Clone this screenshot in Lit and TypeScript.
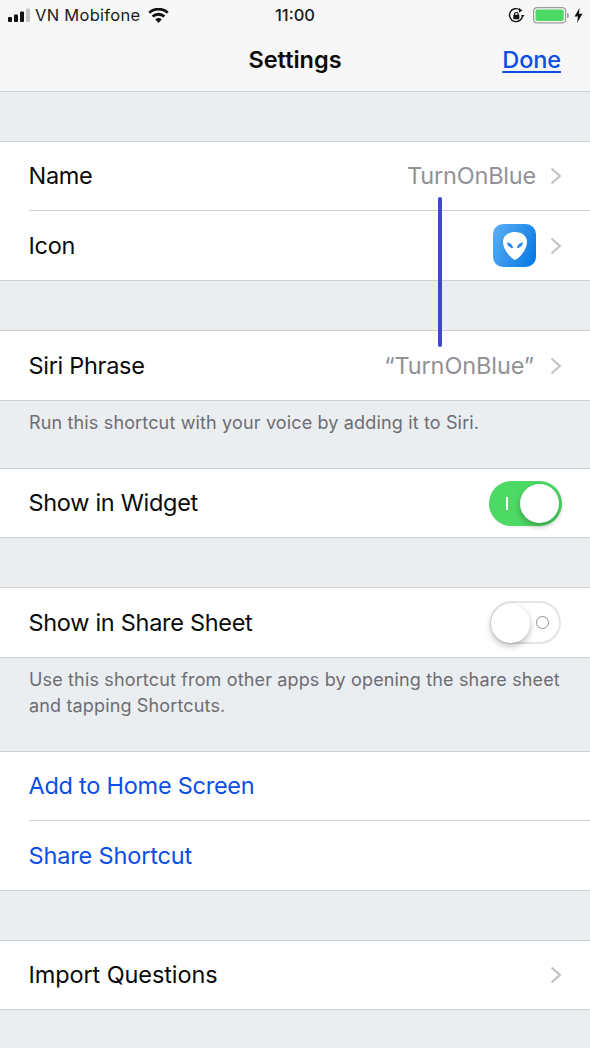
import { LitElement, html, css } from "lit";
import { customElement } from "lit/decorators.js";

const chevron = html`<svg class="chev" width="12" height="18" viewBox="0 0 12 18"><path d="M1.5 1.5 L9.8 9 L1.5 16.5" fill="none" stroke="#c4c4c8" stroke-width="2.3"/></svg>`;

@customElement("app-root")
export class AppRoot extends LitElement {
  static styles = css`
    :host { display: block; width: 590px; height: 1048px; background: #ebeef1; font-family: Inter, "Liberation Sans", sans-serif; color: #0a0a0a; position: relative; overflow: hidden; }
    .top { height: 91px; background: #f7f7f7; border-bottom: 1px solid #d0d1d3; display: flex; flex-direction: column; }
    .status { height: 30px; display: flex; align-items: center; padding: 0 7px 0 8px; font-size: 16.5px; position: relative; color: #1a1a1a; }
    .status .left { display: flex; align-items: center; gap: 5px; flex: 1; }
    .status .carrier { letter-spacing: 0.28px; margin-right: 3px; margin-left: -1px; }
    .status .time { position: absolute; left: 0; right: 0; text-align: center; font-weight: 500; font-size: 16.5px; }
    .status .right { display: flex; align-items: center; gap: 6px; }
    .batt { margin: 0 -2px 0 2px; }
    .nav { flex: 1; display: flex; align-items: center; justify-content: center; position: relative; padding-bottom: 2px; }
    .title { font-size: 23.5px; font-weight: 600; letter-spacing: 0; }
    .done { position: absolute; right: 29px; top: 15px; font-size: 23.5px; font-weight: 500; color: #0a4ee4; text-decoration: underline; text-underline-offset: 3px; letter-spacing: -0.1px; }
    .gap { height: 49px; }
    .sec { background: #fff; border-top: 1px solid #d0d1d3; border-bottom: 1px solid #d0d1d3; }
    .row { height: 69px; display: flex; align-items: center; padding: 0 29px; font-size: 23.5px; letter-spacing: -0.3px; }
    .row.s { height: 68px; }
    .row.w1 { letter-spacing: -0.25px; }
    .row.w2 { letter-spacing: -0.15px; }
    .row.w3 { letter-spacing: -0.1px; }
    .row + .row { border-top: 1px solid #d0d1d3; margin-left: 29px; padding-left: 0; }
    .row .label { flex: 1; margin-left: -0.5px; position: relative; top: -0.5px; }
    .chev { margin-right: -1px; }
    .val { color: #929296; margin-right: 14px; letter-spacing: -0.2px; position: relative; top: -0.5px; }
    .val.q { margin-right: 16px; letter-spacing: -0.1px; }
    .link { color: #0a4ee4; }
    .note { padding: 9px 29px 0; font-size: 18px; line-height: 25.5px; color: #6d6d72; letter-spacing: 0.15px; box-sizing: border-box; }
    .note.one { height: 67px; }
    .note.two { height: 93px; }
    .tile { width: 43px; height: 43px; border-radius: 10px; background: linear-gradient(115deg, #5cb0f5, #0275e3); margin-right: 14px; display: flex; align-items: center; justify-content: center; }
    .sw { height: 45px; border-radius: 23px; box-sizing: border-box; position: relative; }
    .sw.on { width: 73px; background: #4cd964; margin-right: -1px; box-shadow: 0 1px 3px rgba(0,0,0,.08); }
    .sw.off { width: 71px; height: 43px; background: #fff; border: 2px solid #e4e4e4; margin-bottom: 1px; }
    .knob { position: absolute; width: 39px; height: 39px; border-radius: 50%; background: #fff; box-shadow: 0 3px 6px rgba(0,0,0,.28); }
    .on .knob { right: 3px; top: 3px; }
    .off .knob { left: -1px; top: 1px; }
    .on .mark { position: absolute; left: 17px; top: 16px; width: 2px; height: 13px; background: #fff; }
    .off .mark { position: absolute; right: 10px; top: 13px; width: 11px; height: 11px; border: 1.5px solid #8e8e93; border-radius: 50%; }
    .line { position: absolute; left: 438px; top: 197px; width: 3.5px; height: 150px; border-radius: 2px; background: #3f48cc; }
  `;

  render() {
    return html`
      <div class="top">
        <div class="status">
          <div class="left">
            <svg width="23" height="14" viewBox="0 0 23 14">
              <rect x="0" y="9" width="4" height="5" rx="1" fill="#111"/>
              <rect x="6" y="6.5" width="4" height="7.5" rx="1" fill="#111"/>
              <rect x="12" y="3.5" width="4" height="10.5" rx="1" fill="#111"/>
              <rect x="18" y="0.5" width="4" height="13.5" rx="1" fill="#c4c4c4"/>
            </svg>
            <span class="carrier">VN Mobifone</span>
            <svg width="21" height="15" viewBox="0 0 21 15"><path d="M10.5 15 L7.3 11.4 A4.6 4.6 0 0 1 13.7 11.4 Z M5.6 9.6 L3.7 7.5 A9.8 9.8 0 0 1 17.3 7.5 L15.4 9.6 A7.2 7.2 0 0 0 5.6 9.6 Z M2.2 5.8 L0.3 3.8 A14.8 14.8 0 0 1 20.7 3.8 L18.8 5.8 A12.2 12.2 0 0 0 2.2 5.8 Z" fill="#111"/></svg>
          </div>
          <span class="time">11:00</span>
          <div class="right">
            <svg width="17" height="17" viewBox="0 0 17 17"><path d="M14.5 8.5 A6.5 6.5 0 1 1 12 3" fill="none" stroke="#111" stroke-width="1.4"/><path d="M11 1 L14.5 3.5 L11 5.5 Z M13 8 L16.5 8 L14.7 10.5 Z" fill="#111"/><rect x="5.3" y="7.7" width="6" height="4.6" rx=".7" fill="#111"/><path d="M6.5 8 V6.6 a2 2 0 0 1 3.6 0 V8" fill="none" stroke="#111" stroke-width="1.1"/></svg>
            <svg class="batt" width="37" height="17" viewBox="0 0 37 17"><rect x=".6" y=".6" width="32" height="15.3" rx="3.5" fill="none" stroke="#9c9c9c" stroke-width="1.2"/><rect x="2.5" y="2.5" width="28.2" height="11.5" rx="1.8" fill="#4cd964"/><rect x="34" y="6" width="1.6" height="5" rx=".8" fill="#9c9c9c"/></svg>
            <svg class="bolt" width="9" height="15" viewBox="0 0 9 15"><path d="M5.5 0 L0.5 8.5 H4 L3 15 L8.5 5.8 H5 Z" fill="#111"/></svg>
          </div>
        </div>
        <div class="nav">
          <span class="title">Settings</span>
          <span class="done">Done</span>
        </div>
      </div>
      <div class="gap"></div>
      <div class="sec">
        <div class="row s"><span class="label">Name</span><span class="val">TurnOnBlue</span>${chevron}</div>
        <div class="row"><span class="label">Icon</span>
          <span class="tile"><svg width="26" height="30" viewBox="0 0 26 30"><path d="M13 1 C20 1 25 5 25 11 C25 18 18 27 13 29 C8 27 1 18 1 11 C1 5 6 1 13 1 Z" fill="#fff"/><path d="M5 11.5 C8 11.5 11 14 11 17 C8 17 5 14.5 5 11.5 Z M21 11.5 C18 11.5 15 14 15 17 C18 17 21 14.5 21 11.5 Z" fill="#2a8ce8"/></svg></span>${chevron}</div>
      </div>
      <div class="gap"></div>
      <div class="sec">
        <div class="row"><span class="label">Siri Phrase</span><span class="val q">“TurnOnBlue”</span>${chevron}</div>
      </div>
      <div class="note one">Run this shortcut with your voice by adding it to Siri.</div>
      <div class="sec">
        <div class="row s"><span class="label">Show in Widget</span><div class="sw on"><span class="mark"></span><span class="knob"></span></div></div>
      </div>
      <div class="gap"></div>
      <div class="sec">
        <div class="row"><span class="label">Show in Share Sheet</span><div class="sw off"><span class="mark"></span><span class="knob"></span></div></div>
      </div>
      <div class="note two">Use this shortcut from other apps by opening the share sheet<br>and tapping Shortcuts.</div>
      <div class="sec">
        <div class="row s link w1"><span class="label">Add to Home Screen</span></div>
        <div class="row link w2"><span class="label">Share Shortcut</span></div>
      </div>
      <div class="gap"></div>
      <div class="sec">
        <div class="row s w3"><span class="label">Import Questions</span>${chevron}</div>
      </div>
      <div class="line"></div>
    `;
  }
}
